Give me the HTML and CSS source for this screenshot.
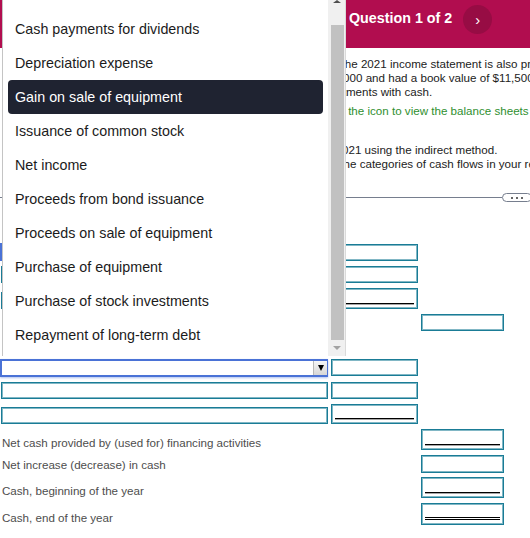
FILE: index.html
```html
<!DOCTYPE html>
<html lang="en">
<head>
<meta charset="utf-8">
<title>Question 1 of 2</title>
<link rel="stylesheet" href="styles.css">
</head>
<body>
<div class="page">
  <header class="topbar">
    <div class="title">Question 1 of 2</div>
    <button class="next" type="button">&#8250;</button>
  </header>

  <section class="intro">
    <div class="ln l1">The 2021 income statement is also provided. Equipment with a cost of</div>
    <div class="ln l2">$13,000 and had a book value of $11,500 was sold for cash.</div>
    <div class="ln l3">investments with cash.</div>
    <div class="ln l4">Click the icon to view the balance sheets</div>
    <div class="ln l5">2021 using the indirect method.</div>
    <div class="ln l6">the categories of cash flows in your response.</div>
  </section>

  <div class="divider">
    <span class="rule"></span>
    <span class="pill"><i></i><i></i><i></i></span>
  </div>

  <div class="form">
    <div class="row">
      <div class="select"></div>
      <div class="box"></div>
    </div>
    <div class="row">
      <div class="wide"></div>
      <div class="box"></div>
    </div>
    <div class="row">
      <div class="wide"></div>
      <div class="box tall"><span class="ul"></span></div>
    </div>
    <div class="row">
      <div></div>
      <div></div>
      <div class="box"></div>
    </div>

    <div class="row top gap-big">
      <div class="select focus"><span class="sel-btn"><span class="tri"></span></span></div>
      <div class="box"></div>
    </div>
    <div class="row">
      <div class="wide"></div>
      <div class="box"></div>
    </div>
    <div class="row">
      <div class="wide"></div>
      <div class="box tall2"><span class="ul"></span></div>
    </div>

    <div class="row">
      <div class="label">Net cash provided by (used for) financing activities</div>
      <div></div>
      <div class="box tall"><span class="ul"></span></div>
    </div>
    <div class="row">
      <div class="label up2">Net increase (decrease) in cash</div>
      <div></div>
      <div class="box mid"></div>
    </div>
    <div class="row gap4">
      <div class="label">Cash, beginning of the year</div>
      <div></div>
      <div class="box tall"><span class="ul"></span></div>
    </div>
    <div class="row">
      <div class="label">Cash, end of the year</div>
      <div></div>
      <div class="box tall3"><span class="ul dbl"></span></div>
    </div>
  </div>
</div>

<div class="dropdown">
  <div class="opts">
    <div class="opt">Cash payments for dividends</div>
    <div class="opt">Depreciation expense</div>
    <div class="opt sel">Gain on sale of equipment</div>
    <div class="opt">Issuance of common stock</div>
    <div class="opt">Net income</div>
    <div class="opt">Proceeds from bond issuance</div>
    <div class="opt">Proceeds on sale of equipment</div>
    <div class="opt">Purchase of equipment</div>
    <div class="opt">Purchase of stock investments</div>
    <div class="opt">Repayment of long-term debt</div>
  </div>
  <div class="sbar">
    <div class="sb-up"><span class="up-tri"></span></div>
    <div class="thumb"></div>
    <div class="sb-down"><span class="down-tri"></span></div>
  </div>
</div>
</body>
</html>
```

FILE: styles.css
```css
* { box-sizing: border-box; margin: 0; padding: 0; }
html, body { width: 530px; height: 538px; overflow: hidden; }
body {
  font-family: "Liberation Sans", Arial, sans-serif;
  background: #fff;
  position: relative;
}

/* header */
.topbar {
  height: 48px;
  background: #b10d4f;
  display: flex;
  align-items: flex-start;
  gap: 11px;
  padding: 5px 0 0 349px;
}
.title {
  color: #fff;
  font-weight: bold;
  font-size: 14.3px;
  line-height: 17px;
  margin-top: 5px;
  white-space: nowrap;
}
.next {
  width: 29px;
  height: 29px;
  border-radius: 50%;
  border: none;
  background: #970c44;
  color: #fff;
  font-family: "Liberation Sans", Arial, sans-serif;
  font-size: 15px;
  font-weight: normal;
  line-height: 27px;
  text-align: center;
}

/* question text */
.intro {
  width: 530px;
  overflow: hidden;
  padding-top: 9px;
  font-size: 11.6px;
  line-height: 14px;
  color: #222;
  white-space: nowrap;
}
.l1 { margin-left: 337.7px; }
.l2 { margin-left: 320.5px; }
.l3 { margin-left: 315.6px; }
.l4 { margin-left: 319.8px; margin-top: 5px; color: #2f8f2f; }
.l5 { margin-left: 335.6px; margin-top: 25px; }
.l6 { margin-left: 340.3px; }

.divider {
  display: flex;
  align-items: center;
  height: 9px;
  margin-top: 22px;
  width: 540px;
}
.rule { width: 502px; height: 1px; background: #767e8e; }
.pill {
  width: 30px;
  height: 9px;
  border: 1px solid #767e8e;
  border-radius: 5px;
  display: flex;
  align-items: center;
  justify-content: center;
  gap: 3px;
}
.pill i { width: 2px; height: 2px; background: #333; border-radius: 1px; }

/* form */
.form { margin-top: 41px; display: flex; flex-direction: column; }
.row {
  display: grid;
  grid-template-columns: 328px 87px 83px;
  column-gap: 3px;
  align-items: end;
  margin-top: 5px;
}
.row:first-child { margin-top: 0; }
.row.top { align-items: start; }
.row.gap-big { margin-top: 28px; }
.row.gap4 { margin-top: 4px; }

.box {
  height: 17px;
  border: 1px solid #1a7c96;
  box-shadow: inset 0 0 0 1px rgba(26, 124, 150, 0.55);
  background: #fff;
  display: flex;
  align-items: flex-end;
  padding: 0 3px 4px;
}
.box.mid { height: 18px; }
.box.tall { height: 21px; }
.box.tall2 { height: 20px; }
.box.tall3 { height: 22px; }
.ul { display: block; width: 100%; border-bottom: 1px solid #000; box-shadow: 0 1px 0 rgba(0, 0, 0, 0.35); }
.ul.dbl { border-bottom: 3px double #000; box-shadow: none; }

.wide {
  height: 17px;
  margin-left: 1px;
  border: 1px solid #1a7c96;
  box-shadow: inset 0 0 0 1px rgba(26, 124, 150, 0.55);
  background: #fff;
}
.select {
  height: 18px;
  border: 2px solid #4a72d6;
  background: #fff;
  display: flex;
  justify-content: flex-end;
}
.select.focus { box-shadow: 0 1px 2px rgba(80, 120, 220, 0.45); }
.sel-btn {
  width: 14px;
  height: 14px;
  margin-right: -1px;
  background: linear-gradient(#f6f6f6, #d6d6d6);
  border-left: 1px solid #b8b8b8;
  display: flex;
  align-items: center;
  justify-content: center;
}
.tri {
  width: 0;
  height: 0;
  border-left: 3.5px solid transparent;
  border-right: 3.5px solid transparent;
  border-top: 6px solid #000;
}

.label {
  font-size: 11.6px;
  line-height: 14px;
  color: #4d4d4d;
  padding-left: 2px;
  white-space: nowrap;
}
.label.up2 { margin-bottom: 1px; }

/* open dropdown list */
.dropdown {
  position: absolute;
  left: 2px;
  top: 0;
  width: 344px;
  height: 356px;
  background: #fff;
  border-left: 1px solid #c4c4c4;
  border-right: 1px solid #dadada;
  display: flex;
}
.opts { flex: 1; padding-top: 12px; }
.opt {
  height: 34px;
  margin: 0 5px;
  padding-left: 7px;
  display: flex;
  align-items: center;
  font-size: 14.3px;
  color: #1b1b1b;
  white-space: nowrap;
  border-radius: 4px;
}
.opt.sel { background: #1f2331; color: #fff; }

.sbar {
  width: 17px;
  background: #f0f0f0;
  display: flex;
  flex-direction: column;
}
.sb-up { height: 25px; display: flex; justify-content: center; }
.up-tri {
  width: 0;
  height: 0;
  border-left: 4px solid transparent;
  border-right: 4px solid transparent;
  border-bottom: 3px solid #4e4e4e;
}
.thumb { height: 315px; margin: 0 1px 0 3px; background: #c1c1c1; }
.sb-down { height: 16px; display: flex; justify-content: center; padding-top: 6px; }
.down-tri {
  width: 0;
  height: 0;
  border-left: 4px solid transparent;
  border-right: 4px solid transparent;
  border-top: 4px solid #a3a3a3;
}
```
